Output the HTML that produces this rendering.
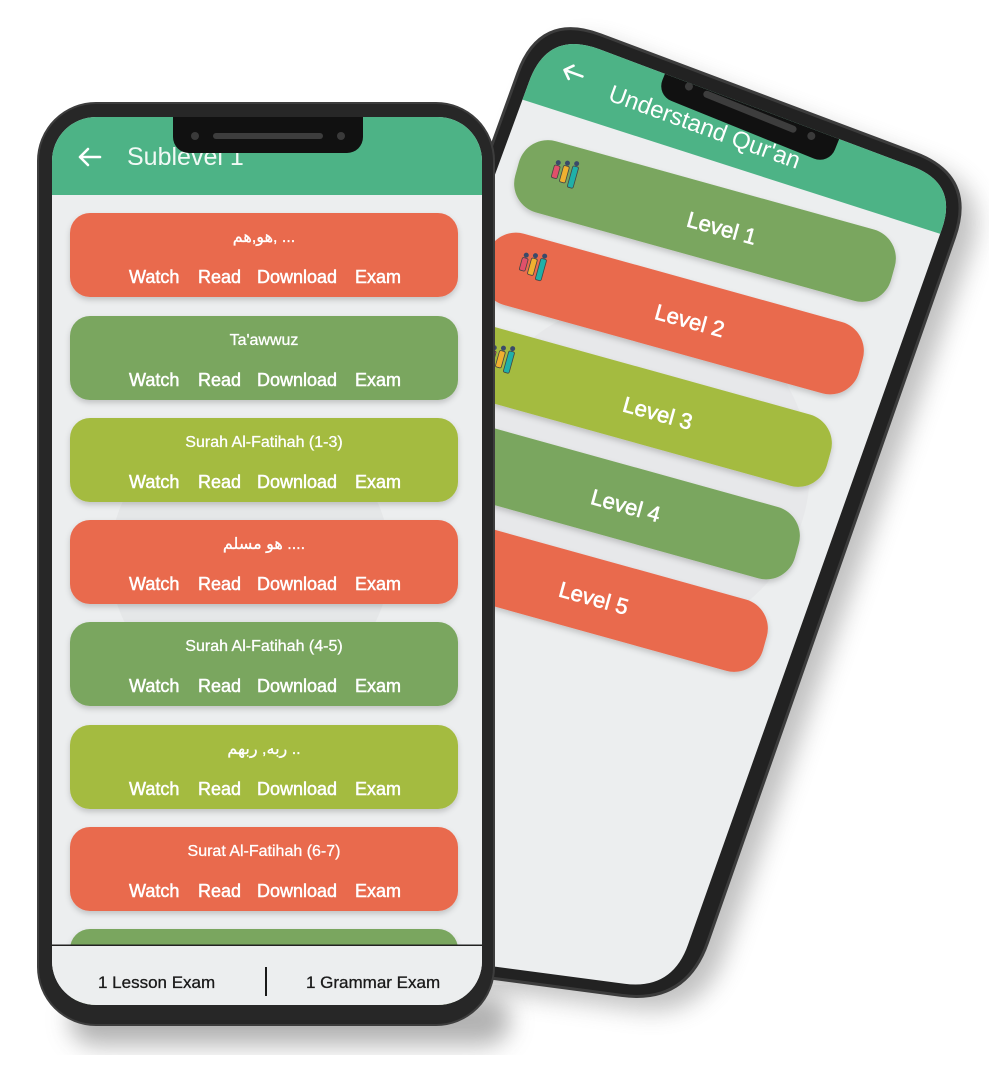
<!DOCTYPE html>
<html><head><meta charset="utf-8"><style>
html,body{margin:0;padding:0;background:#fff;}
svg{display:block;font-family:"Liberation Sans","DejaVu Sans",sans-serif;}
</style></head><body>
<svg width="989" height="1079" viewBox="0 0 989 1079" xmlns="http://www.w3.org/2000/svg">
<defs>
<filter id="blur12" x="-20%" y="-20%" width="140%" height="140%"><feGaussianBlur stdDeviation="12"/></filter>
<filter id="cs" x="-10%" y="-20%" width="120%" height="150%"><feDropShadow dx="0" dy="3" stdDeviation="3" flood-color="#000" flood-opacity="0.18"/></filter>
<clipPath id="bs"><path d="M599.5,49.3 L913.2,166.8 Q958,184 941.8,229.2 L688,944.7 Q672,990 624.4,983.7 L265.6,936.3 Q218,930 234.5,885 L529.1,81.6 Q548,30 599.5,49.3Z"/></clipPath>
<clipPath id="fs"><rect x="52" y="117" width="430" height="888" rx="44"/></clipPath>
</defs>

<!-- back phone shadow -->
<path d="M600.8,34.9 L915.2,153.1 Q976,176 954.5,237.4 L707.5,942.6 Q686,1004 621.6,995.4 L269.4,948.6 Q205,940 227.1,878.9 L517.9,73.1 Q540,12 600.8,34.9Z" transform="translate(16,14)" fill="#777" opacity="0.45" filter="url(#blur12)"/>
<!-- back phone body -->
<path d="M600.8,34.9 L915.2,153.1 Q976,176 954.5,237.4 L707.5,942.6 Q686,1004 621.6,995.4 L269.4,948.6 Q205,940 227.1,878.9 L517.9,73.1 Q540,12 600.8,34.9Z" fill="#222" stroke="#3c3c3c" stroke-width="3"/>
<path d="M599.5,49.3 L913.2,166.8 Q958,184 941.8,229.2 L688,944.7 Q672,990 624.4,983.7 L265.6,936.3 Q218,930 234.5,885 L529.1,81.6 Q548,30 599.5,49.3Z" fill="#eceeef"/>
<g clip-path="url(#bs)">
  <circle cx="640" cy="470" r="170" fill="#e4e5e6" opacity="0.6"/>
  <polygon points="480,0 1000,0 1000,253 480,86" fill="#4db386"/>
  <g fill="#fff" stroke="#fff">
    <g transform="translate(573,73) rotate(20)"><path d="M10,0 H-9 M-2,-7 L-9,0 L-2,7" fill="none" stroke-width="2.6" stroke-linecap="round" stroke-linejoin="round"/></g>
    <text x="607" y="100" font-size="24" stroke="none" transform="rotate(20 607 100)">Understand Qur'an</text>
  </g>
  <g filter="url(#cs)">
  <g transform="translate(705,221) rotate(15.5)"><rect x="-195" y="-37" width="390" height="74" rx="30" fill="#7aa65e"/></g>
  <g transform="translate(673,313.5) rotate(15.5)"><rect x="-195" y="-37" width="390" height="74" rx="30" fill="#e96a4e"/></g>
  <g transform="translate(641,406) rotate(15.5)"><rect x="-195" y="-37" width="390" height="74" rx="30" fill="#a4bb40"/></g>
  <g transform="translate(609,498.5) rotate(15.5)"><rect x="-195" y="-37" width="390" height="74" rx="30" fill="#7aa65e"/></g>
  <g transform="translate(577,591) rotate(15.5)"><rect x="-195" y="-37" width="390" height="74" rx="30" fill="#e96a4e"/></g>
  </g>
  <g fill="#fff" font-size="22" text-anchor="middle" stroke="#fff" stroke-width="0.6">
  <g transform="translate(705,221) rotate(15.5)"><text x="18" y="10">Level 1</text></g>
  <g transform="translate(673,313.5) rotate(15.5)"><text x="18" y="10">Level 2</text></g>
  <g transform="translate(641,406) rotate(15.5)"><text x="18" y="10">Level 3</text></g>
  <g transform="translate(609,498.5) rotate(15.5)"><text x="18" y="10">Level 4</text></g>
  <g transform="translate(577,591) rotate(15.5)"><text x="18" y="10">Level 5</text></g>
  </g>
  <g transform="translate(705,221) rotate(15.5)">
    <rect x="-160" y="-14" width="6" height="13" rx="1.5" fill="#e0506a" stroke="#444" stroke-width="0.8"/>
    <rect x="-151" y="-16" width="6" height="17" rx="1.5" fill="#f0b030" stroke="#444" stroke-width="0.8"/>
    <rect x="-142" y="-18" width="6" height="22" rx="1.5" fill="#20b0a8" stroke="#444" stroke-width="0.8"/>
    <circle cx="-157" cy="-17" r="2.5" fill="#3a4a6a"/><circle cx="-148" cy="-19" r="2.5" fill="#3a4a6a"/><circle cx="-139" cy="-21" r="2.5" fill="#3a4a6a"/>
  </g>
  <g transform="translate(673,313.5) rotate(15.5)">
    <rect x="-160" y="-14" width="6" height="13" rx="1.5" fill="#e0506a" stroke="#444" stroke-width="0.8"/>
    <rect x="-151" y="-16" width="6" height="17" rx="1.5" fill="#f0b030" stroke="#444" stroke-width="0.8"/>
    <rect x="-142" y="-18" width="6" height="22" rx="1.5" fill="#20b0a8" stroke="#444" stroke-width="0.8"/>
    <circle cx="-157" cy="-17" r="2.5" fill="#3a4a6a"/><circle cx="-148" cy="-19" r="2.5" fill="#3a4a6a"/><circle cx="-139" cy="-21" r="2.5" fill="#3a4a6a"/>
  </g>
  <g transform="translate(641,406) rotate(15.5)">
    <rect x="-160" y="-14" width="6" height="13" rx="1.5" fill="#e0506a" stroke="#444" stroke-width="0.8"/>
    <rect x="-151" y="-16" width="6" height="17" rx="1.5" fill="#f0b030" stroke="#444" stroke-width="0.8"/>
    <rect x="-142" y="-18" width="6" height="22" rx="1.5" fill="#20b0a8" stroke="#444" stroke-width="0.8"/>
    <circle cx="-157" cy="-17" r="2.5" fill="#3a4a6a"/><circle cx="-148" cy="-19" r="2.5" fill="#3a4a6a"/><circle cx="-139" cy="-21" r="2.5" fill="#3a4a6a"/>
  </g>
  <g transform="translate(749,114) rotate(22)">
    <rect x="-93" y="-70" width="186" height="87" rx="16" fill="#111"/>
    <rect x="-50" y="-6" width="100" height="7" rx="3.5" fill="#3d3d3d"/>
    <circle cx="-66" cy="-3" r="4" fill="#3a3a3a"/><circle cx="66" cy="-3" r="4" fill="#3a3a3a"/>
  </g>
</g>

<!-- front phone shadow -->
<rect x="70" y="995" width="440" height="50" rx="25" fill="#666" opacity="0.5" filter="url(#blur12)"/>
<!-- front phone -->
<rect x="38" y="103" width="456" height="922" rx="58" fill="#272727" stroke="#3d3d3d" stroke-width="2"/>
<rect x="52" y="117" width="430" height="888" rx="44" fill="#eceeef"/>
<g clip-path="url(#fs)">
  <circle cx="250" cy="560" r="140" fill="#e3e4e5" opacity="0.7"/>
  <rect x="52" y="100" width="430" height="95" fill="#4db386"/>
  <path d="M100,157 H80 M88,149 L80,157 L88,165" fill="none" stroke="#fff" stroke-width="2.6" stroke-linecap="round" stroke-linejoin="round"/>
  <text x="127" y="165" font-size="25" fill="#fff" opacity="0.92">Sublevel 1</text>
  <rect x="173" y="96" width="190" height="57" rx="16" fill="#111"/>
  <rect x="213" y="133" width="110" height="6" rx="3" fill="#3d3d3d"/>
  <circle cx="195" cy="136" r="4" fill="#3a3a3a"/><circle cx="341" cy="136" r="4" fill="#3a3a3a"/>

  <g filter="url(#cs)">
    <rect x="70" y="213" width="388" height="84" rx="20" fill="#e96a4e"/>
    <rect x="70" y="316" width="388" height="84" rx="20" fill="#7aa65e"/>
    <rect x="70" y="418" width="388" height="84" rx="20" fill="#a4bb40"/>
    <rect x="70" y="520" width="388" height="84" rx="20" fill="#e96a4e"/>
    <rect x="70" y="622" width="388" height="84" rx="20" fill="#7aa65e"/>
    <rect x="70" y="725" width="388" height="84" rx="20" fill="#a4bb40"/>
    <rect x="70" y="827" width="388" height="84" rx="20" fill="#e96a4e"/>
    <rect x="70" y="929" width="388" height="84" rx="20" fill="#7aa65e"/>
  </g>
  <g fill="#fff" font-size="16" text-anchor="middle" stroke="#fff" stroke-width="0.3">
    <text x="264" y="242">هو,هم, ...</text>
    <text x="264" y="345">Ta'awwuz</text>
    <text x="264" y="447">Surah Al-Fatihah (1-3)</text>
    <text x="264" y="549">هو مسلم ....</text>
    <text x="264" y="651">Surah Al-Fatihah (4-5)</text>
    <text x="264" y="754">ربه, ربهم ..</text>
    <text x="264" y="856">Surat Al-Fatihah (6-7)</text>
  </g>
  <g fill="#fff" font-size="18" stroke="#fff" stroke-width="0.5">
    <g id="row"><text x="129" y="283">Watch</text><text x="198" y="283">Read</text><text x="257" y="283">Download</text><text x="355" y="283">Exam</text></g>
    <use href="#row" y="103"/>
    <use href="#row" y="205"/>
    <use href="#row" y="307"/>
    <use href="#row" y="409"/>
    <use href="#row" y="512"/>
    <use href="#row" y="614"/>
  </g>
  <rect x="52" y="945" width="430" height="70" fill="#eceeef"/>
  <rect x="52" y="944.5" width="430" height="1.5" fill="#222"/>
  <text x="98" y="988" font-size="17" fill="#1a1a1a" stroke="#1a1a1a" stroke-width="0.3">1 Lesson Exam</text>
  <rect x="265" y="967" width="2" height="29" fill="#1a1a1a"/>
  <text x="306" y="988" font-size="17" fill="#1a1a1a" stroke="#1a1a1a" stroke-width="0.3">1 Grammar Exam</text>
</g>
</svg>
</body></html>
